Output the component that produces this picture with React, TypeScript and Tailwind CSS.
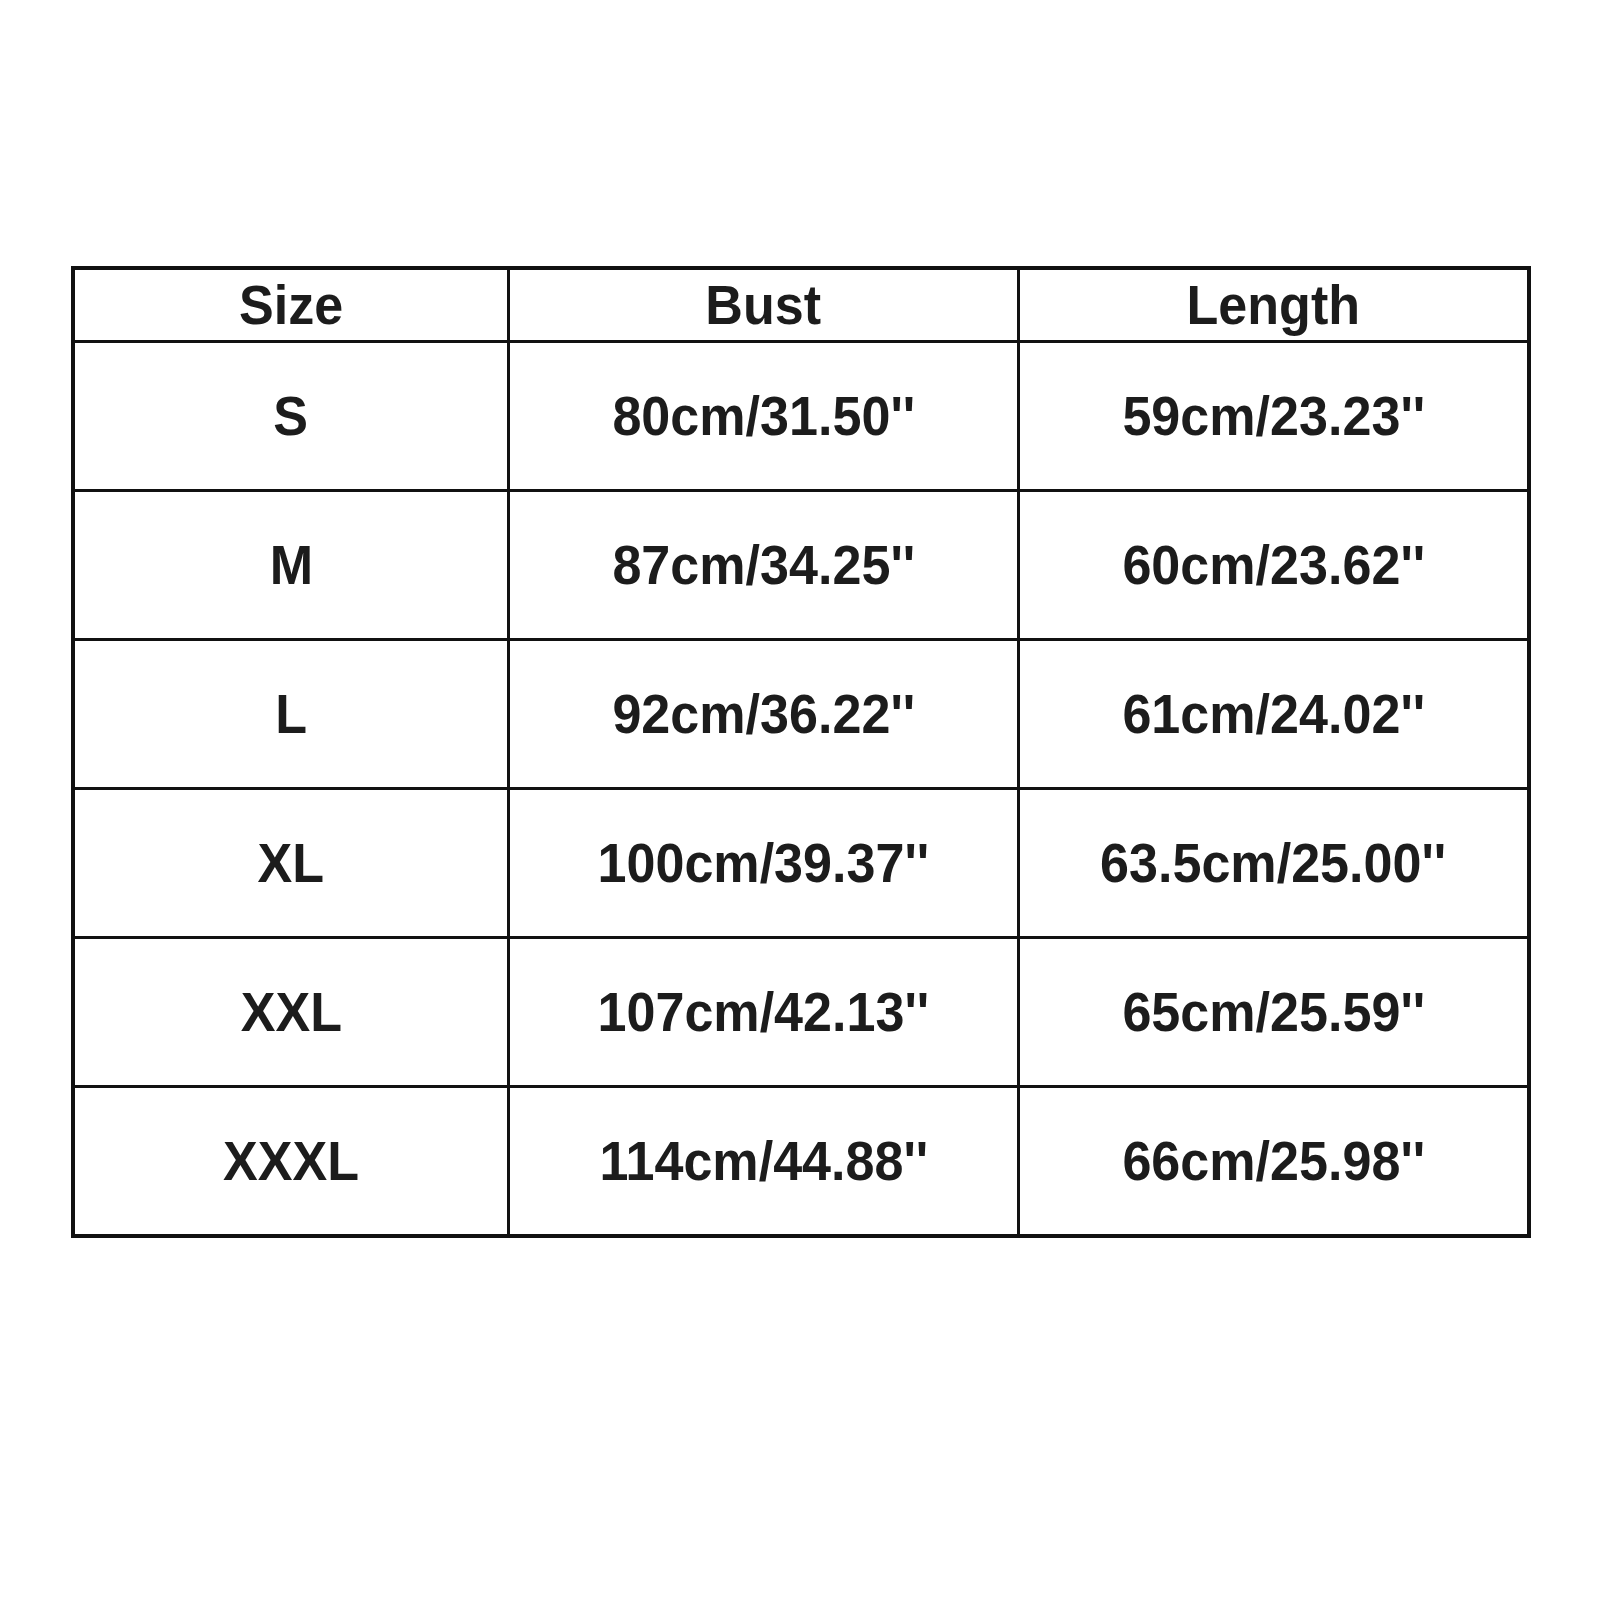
import React from "react";

const rows: [string, string, string][] = [
  ["S", "80cm/31.50''", "59cm/23.23''"],
  ["M", "87cm/34.25''", "60cm/23.62''"],
  ["L", "92cm/36.22''", "61cm/24.02''"],
  ["XL", "100cm/39.37''", "63.5cm/25.00''"],
  ["XXL", "107cm/42.13''", "65cm/25.59''"],
  ["XXXL", "114cm/44.88''", "66cm/25.98''"],
];

function Cell({ text, header }: { text: string; header?: boolean }) {
  return (
    <div
      className={`bg-white flex items-center justify-center ${header ? "h-[70px]" : "h-[146px]"}`}
    >
      <span className="inline-block scale-x-[0.93] text-[56px] font-bold leading-none text-[#1c1c1c] whitespace-nowrap">
        {text}
      </span>
    </div>
  );
}

export default function App() {
  return (
    <div
      className="w-[1600px] h-[1600px] bg-white pt-[266px] pl-[71px]"
      style={{ fontFamily: '"Liberation Sans", Arial, sans-serif' }}
    >
      <div className="w-[1460px] border-[4px] border-[#111]">
        <div className="grid grid-cols-[432px_507px_507px] gap-[3px] bg-[#111]">
          <Cell text="Size" header />
          <Cell text="Bust" header />
          <Cell text="Length" header />
          {rows.map((r) => (
            <React.Fragment key={r[0]}>
              <Cell text={r[0]} />
              <Cell text={r[1]} />
              <Cell text={r[2]} />
            </React.Fragment>
          ))}
        </div>
      </div>
    </div>
  );
}
